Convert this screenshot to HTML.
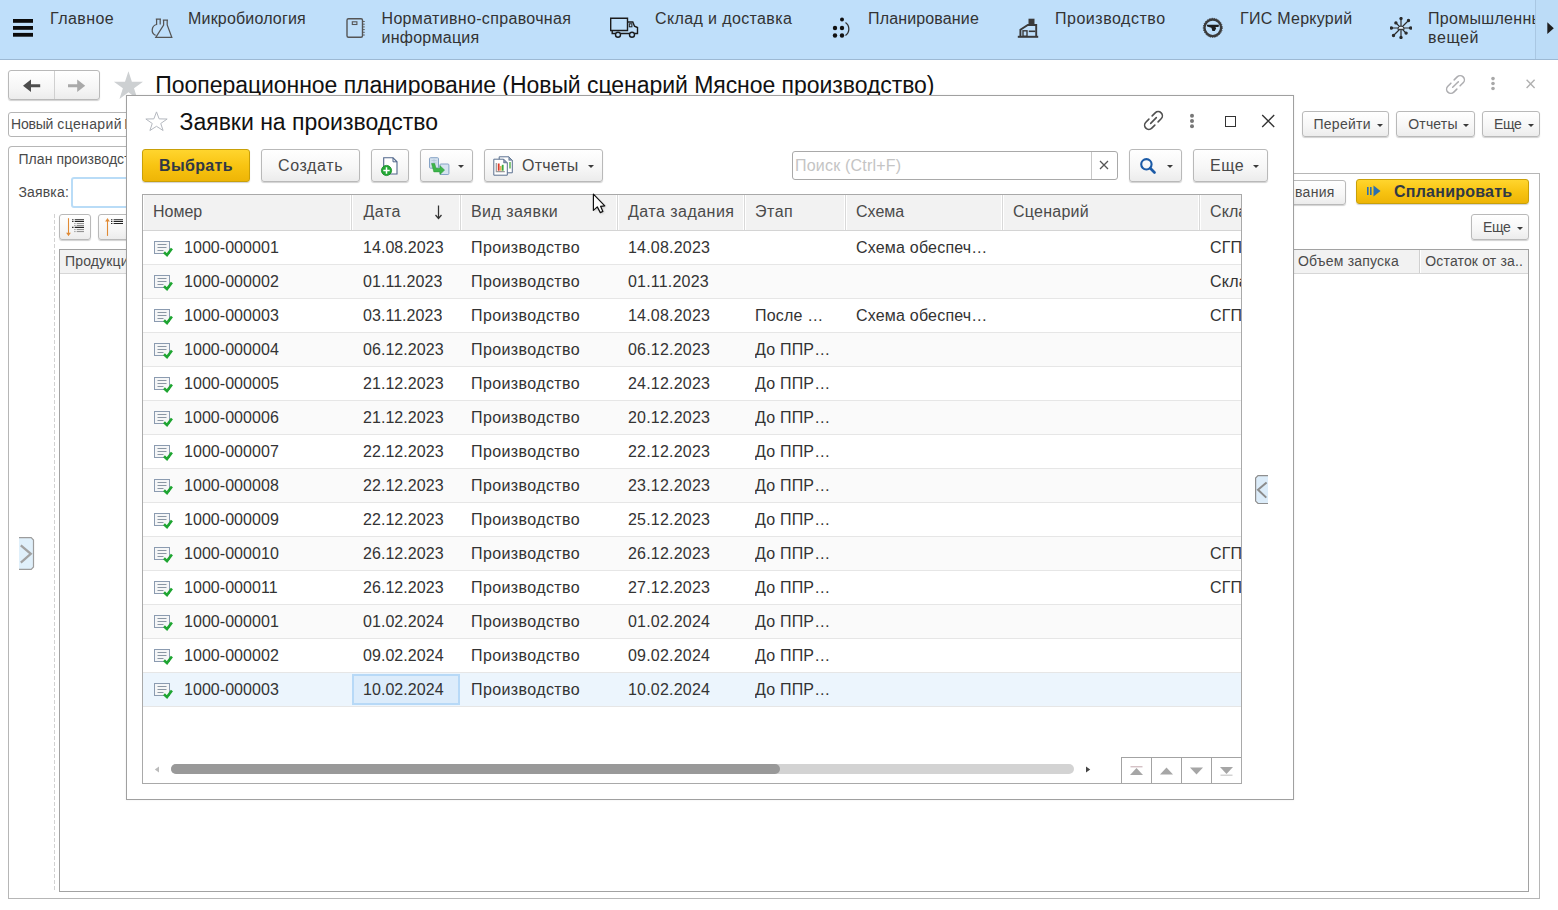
<!DOCTYPE html>
<html lang="ru">
<head>
<meta charset="utf-8">
<title>Заявки на производство</title>
<style>
*{box-sizing:border-box;margin:0;padding:0}
html,body{width:1558px;height:910px;overflow:hidden;background:#fff}
body{font-family:"Liberation Sans",sans-serif;color:#333;position:relative;font-size:14px}
.abs{position:absolute}
#top{position:absolute;left:0;top:0;width:1558px;height:60px;background:#bfdffa;border-bottom:1px solid #9db9d3}
#top .t{position:absolute;letter-spacing:.22px;font-size:16px;line-height:19px;color:#333;white-space:nowrap}
#top svg{position:absolute}
.btn{position:absolute;border:1px solid #b9b9b9;border-radius:3px;background:linear-gradient(#ffffff 0%,#f6f6f6 60%,#ececec 100%);box-shadow:0 1px 1px rgba(0,0,0,.18);color:#444;white-space:nowrap}
.btn.y{background:linear-gradient(#ffd52e 0%,#f8c412 50%,#eeb506 100%);border-color:#c9a008;color:#333;font-weight:bold}
.lbl{position:absolute;white-space:nowrap}
.caret{position:absolute;width:0;height:0;border-left:3px solid transparent;border-right:3px solid transparent;border-top:3.300px solid #3a3a3a}
.bg .lbl{color:#4a4a4a}
.s14{font-size:14px;line-height:17px}
.s16{font-size:16px;line-height:19px}
#modal{position:absolute;left:126px;top:95px;width:1168px;height:705px;background:#fff;border:1px solid #a0a0a0;box-shadow:0 0 2px rgba(0,0,0,.08)}
#grid{position:absolute;left:142px;top:194px;width:1100px;height:590px;border:1px solid #a9a9a9;background:#fff;overflow:hidden}
#ghead{position:absolute;left:0;top:0;width:1098px;height:36px;background:#f2f2f2;border-bottom:1px solid #d4d4d4}
.hc{position:absolute;top:0;height:35px;border-right:1px solid #d9d9d9;box-shadow:inset -1px 0 0 #fff, inset 1px 0 0 #fff;font-size:16px;line-height:33px;color:#4a4a4a;padding-left:10px;white-space:nowrap;overflow:hidden}
.row{position:absolute;left:0;width:1098px;height:34px;border-bottom:1px solid #e6e6e6;background:#fff}
.row.alt{background:#fafafa}
.row.sel{background:#ecf5fd}
.c{position:absolute;top:0;height:33px;line-height:33px;font-size:16px;color:#333;white-space:nowrap;overflow:hidden}
</style>
</head>
<body>
<div id="top">
<!-- hamburger -->
<svg style="left:13px;top:19px" width="20" height="18" viewBox="0 0 20 18"><rect x="0" y="0" width="20" height="3.800" fill="#0c0c0c"/><rect x="0" y="7" width="20" height="3.800" fill="#0c0c0c"/><rect x="0" y="13.900" width="20" height="3.800" fill="#0c0c0c"/></svg>
<div class="t" style="left:50px;top:9px;letter-spacing:.44px">Главное</div>
<!-- flask -->
<svg style="left:150px;top:16px" width="24" height="24" viewBox="0 0 24 24" fill="none" stroke="#555" stroke-width="1.250"><path d="M5.800 3h5.200M6.600 3v5.500a5.800 5.800 0 0 0 -1 10.900M10.200 3v5.500"/><path d="M12.800 4h5.200M13.600 4v5l-7.800 12.300h16L17.200 9V4"/></svg>
<div class="t" style="left:188px;top:9px;letter-spacing:0.18px">Микробиология</div>
<!-- notebook -->
<svg style="left:345px;top:17px" width="22" height="23" viewBox="0 0 22 23" fill="none" stroke="#555" stroke-width="1.400"><rect x="2" y="1.700" width="15.500" height="18.600" rx="1.500"/><rect x="7.300" y="4.800" width="4.600" height="2.700" stroke-width="1.100"/><path d="M17.500 4.500h2.300M17.500 7.200h2.300M17.500 9.900h2.300M17.500 12.600h2.300M17.500 15.300h2.300M17.500 18h2.300" stroke-width=".9"/></svg>
<div class="t" style="left:381.500px;top:9px"><span style="letter-spacing:.33px">Нормативно-справочная</span><br><span style="letter-spacing:.25px">информация</span></div>
<!-- truck -->
<svg style="left:609px;top:16px" width="30" height="24" viewBox="0 0 30 24" fill="none" stroke="#1c1c1c" stroke-width="1.400"><path d="M1.700 2.200h16.800v12.300h-16.800z"/><path d="M18.500 6h5.300l1.700 4.200 3 1.300v6h-2.700M20.300 17.500h-8.600M6.300 17.500H3.200v-3"/><rect x="20.300" y="7.800" width="2.600" height="3" stroke-width="1"/><circle cx="9" cy="18.800" r="2.500"/><circle cx="23" cy="18.800" r="2.500"/></svg>
<div class="t" style="left:655px;top:9px;letter-spacing:0.38px">Склад и доставка</div>
<!-- planning dots -->
<svg style="left:831px;top:16px" width="22" height="24" viewBox="0 0 22 24"><g fill="#111"><circle cx="11" cy="3.500" r="2"/><circle cx="4" cy="12" r="2.200"/><circle cx="11" cy="12" r="2.200"/><circle cx="4" cy="19.500" r="2.200"/><circle cx="11" cy="19.500" r="2.200"/></g><path d="M14.500 6.500a8 8 0 0 1 0 13" fill="none" stroke="#333" stroke-width="1.300"/></svg>
<div class="t" style="left:868px;top:9px;letter-spacing:0.15px">Планирование</div>
<!-- factory -->
<svg style="left:1017px;top:17px" width="22" height="22" viewBox="0 0 22 22"><path d="M11.500 1.700h6v6.500h-6z" fill="#3a3a3a"/><path d="M3.400 19V12.800L10.800 8h8.400v11" fill="none" stroke="#3a3a3a" stroke-width="1.900"/><path d="M.8 19.800h20.400" stroke="#3a3a3a" stroke-width="2"/><rect x="6" y="13.800" width="4" height="5.500" fill="none" stroke="#3a3a3a" stroke-width="1.400"/><path d="M11.800 14.300h6.500" stroke="#3a3a3a" stroke-width="1.600"/></svg>
<div class="t" style="left:1055px;top:9px;letter-spacing:0.52px">Производство</div>
<!-- mercury -->
<svg style="left:1202px;top:17px" width="22" height="22" viewBox="0 0 22 22"><circle cx="10.800" cy="10.800" r="8.300" fill="none" stroke="#3a3a3a" stroke-width="2.300"/><circle cx="10.800" cy="10.800" r="9.500" fill="none" stroke="#3a3a3a" stroke-width="1" stroke-dasharray="1.300 1.100"/><path d="M4.700 7.800h12.300l-.5 2.200h-3l.6 1.500-1.300 2.600h-2.400l-1-3.300-4.200-1.200z" fill="#1e1e1e"/></svg>
<div class="t" style="left:1240px;top:9px;letter-spacing:0.26px">ГИС Меркурий</div>
<!-- burst -->
<svg style="left:1389.900px;top:16.800px" width="22" height="22" viewBox="0 0 22 22" stroke="#2a2a2a" stroke-width="1.200" fill="#2a2a2a"><path d="M11.0 11.0L20.60 11.00M11.0 11.0L16.09 16.09M11.0 11.0L11.00 20.40M11.0 11.0L3.50 18.50M11.0 11.0L1.40 11.00M11.0 11.0L5.91 5.91M11.0 11.0L11.00 1.60M11.0 11.0L18.50 3.50" fill="none"/><circle cx="20.60" cy="11.00" r="1.100"/><circle cx="16.09" cy="16.09" r="1.100"/><circle cx="11.00" cy="20.40" r="1.100"/><circle cx="3.50" cy="18.50" r="1.100"/><circle cx="1.40" cy="11.00" r="1.100"/><circle cx="5.91" cy="5.91" r="1.100"/><circle cx="11.00" cy="1.60" r="1.100"/><circle cx="18.50" cy="3.50" r="1.100"/><path d="M7.800 12.300a3.200 3.200 0 0 1 6.400 0z" fill="#e4f1fc" stroke-width="1"/></svg>
<div class="t" style="left:1428px;top:9px;width:107px;overflow:hidden"><span style="letter-spacing:.3px">Промышленные</span><br><span style="letter-spacing:.6px">вещей</span></div>
<div class="abs" style="left:1535px;top:0;width:23px;height:59px;background:#bcdcf7;border-left:1px solid #a9c7e2"></div>
<svg style="left:1547px;top:22px" width="9" height="13" viewBox="0 0 9 13"><path d="M0.300 0.300L6.800 6.200L0.300 12.100z" fill="#1e1e1e"/></svg>
</div>
<!--BG-->
<div class="bg" id="bg">
<!-- back/forward -->
<div class="btn" style="left:8px;top:70px;width:92px;height:30px"></div>
<div class="abs" style="left:54px;top:71px;width:1px;height:28px;background:#d0d0d0"></div>
<svg class="abs" style="left:22px;top:78px" width="20" height="15" viewBox="0 0 20 15"><path d="M1 7.700l8-6.200v4.700h9.200v3h-9.200v4.700z" fill="#4d4d4d"/></svg><svg class="abs" style="left:67px;top:78px" width="20" height="15" viewBox="0 0 20 15"><path d="M18.200 7.700l-8-6.200v4.700h-9.200v3h9.200v4.700z" fill="#a9a9a9"/></svg>
<!-- star -->
<svg class="abs" style="left:112px;top:70px" width="33" height="31" viewBox="0 0 33 31"><path d="M16.45 1.20L19.89 11.77L31.00 11.77L22.01 18.31L25.44 28.88L16.45 22.34L7.46 28.88L10.89 18.31L1.90 11.77L13.01 11.77z" fill="#cdd0d2"/></svg>
<div class="lbl" style="left:155.300px;top:72px;font-size:23px;line-height:27px;color:#111;letter-spacing:-.05px">Пооперационное планирование (Новый сценарий Мясное производство)</div>
<!-- right icons -->
<svg class="abs" style="left:1444px;top:72.5px" width="23" height="23" viewBox="-11.500 -11.500 23 23" fill="none" stroke="#adadb0" stroke-width="1.5" stroke-linecap="round"><g transform="rotate(-45)"><path d="M2.300 -4.200H6.600A4.200 4.200 0 0 1 6.600 4.200H2.300"/><path d="M-2.300 -4.200H-6.600A4.200 4.200 0 0 0 -6.600 4.200H-2.300"/><path d="M-4 0H4"/></g></svg>
<svg class="abs" style="left:1490px;top:76px" width="6" height="15" viewBox="0 0 6 15" fill="#a8a8a8"><circle cx="3" cy="2.600" r="1.800"/><circle cx="3" cy="7.500" r="1.800"/><circle cx="3" cy="12.500" r="1.800"/></svg>
<svg class="abs" style="left:1525px;top:78px" width="12" height="12" viewBox="0 0 12 12"><path d="M1.600 1.800l8 8.200M9.600 1.800l-8 8.200" stroke="#b0b0b0" stroke-width="1.400"/></svg>
<!-- row2 -->
<div class="abs" style="left:8px;top:112px;width:400px;height:25px;border:1px solid #b5b5b5;border-radius:3px;background:#fff"></div>
<div class="lbl" style="left:11px;top:116px;font-size:14px;line-height:17px;letter-spacing:0.15px"><span style="letter-spacing:-.2px">Новый</span> <span style="letter-spacing:.38px">сценарий</span><span style="margin-left:-1.800px"> Мясное производство</span></div>
<div class="btn" style="left:1302px;top:111px;width:87px;height:26px"></div>
<div class="lbl" style="left:1313.500px;top:116px;font-size:14px;line-height:17px;letter-spacing:0.25px">Перейти</div><div class="caret" style="left:1377px;top:124px"></div>
<div class="btn" style="left:1396px;top:111px;width:79px;height:26px"></div>
<div class="lbl" style="left:1408.3px;top:116px;font-size:14px;line-height:17px;letter-spacing:0.15px">Отчеты</div><div class="caret" style="left:1463px;top:124px"></div>
<div class="btn" style="left:1482px;top:111px;width:58px;height:26px"></div>
<div class="lbl" style="left:1494px;top:116px;font-size:14px;line-height:17px;letter-spacing:-0.3px">Еще</div><div class="caret" style="left:1528px;top:124px"></div>
<!-- group -->
<div class="abs" style="left:8px;top:173px;width:1532px;height:726px;border:1px solid #b6b6b6;background:#fff"></div><div class="abs" style="left:8px;top:146px;width:400px;height:30px;border:1px solid #b6b6b6;border-bottom:none;border-radius:4px 4px 0 0;background:#fff"></div>
<div class="lbl" style="left:18.5px;top:151px;font-size:14px;line-height:17px;letter-spacing:0.05px">План производства</div>
<div class="lbl" style="left:18.5px;top:184px;font-size:14px;line-height:17px;letter-spacing:0.15px">Заявка:</div>
<div class="abs" style="left:71px;top:177px;width:300px;height:31px;border:2px solid #b9dcf7;border-radius:3px;background:#fff"></div>
<div class="abs" style="left:54px;top:214px;width:1px;height:676px;background:repeating-linear-gradient(#d2d2d2 0,#d2d2d2 3.800px,#fff 3.800px,#fff 6px)"></div>
<div class="btn" style="left:59px;top:214px;width:32px;height:26px"></div>
<svg class="abs" style="left:64px;top:216px" width="22" height="22" viewBox="0 0 22 22"><path d="M4.500 2.200V19.500" stroke="#e08a35" stroke-width="1.100"/><path d="M2.100 16.800L4.500 20 6.900 16.800z" fill="#e08a35"/><path d="M8.100 3.700h1.400M10.700 3.700h9.300M8.100 5.500h1.400M10.700 5.500h9.300M8.100 11.400h1.400M10.700 11.400h9.300" stroke="#222" stroke-width="1.100"/><path d="M10.300 7.600h1.200M12.700 7.600h7.300M10.300 9.500h1.200M12.700 9.500h7.300M10.300 13.600h1.200M12.700 13.600h7.300M10.300 15.600h1.200M12.700 15.600h7.300" stroke="#8a8a8a" stroke-width="1"/></svg>
<div class="btn" style="left:98px;top:214px;width:32px;height:26px"></div>
<svg class="abs" style="left:103px;top:216px" width="22" height="22" viewBox="0 0 22 22"><path d="M4.500 19.900V2.700" stroke="#e08a35" stroke-width="1.100"/><path d="M2.100 5.400L4.500 2.200 6.900 5.400z" fill="#e08a35"/><path d="M8 3.700h1.400M10.600 3.700h9.400M8 5.500h1.400M10.600 5.500h9.400M8 7.500h1.400M10.600 7.500h9.400" stroke="#222" stroke-width="1.100"/></svg>
<!-- bg table -->
<div class="abs" style="left:59px;top:249px;width:1470px;height:643px;border:1px solid #a2a2a2;background:#fff"></div>
<div class="abs" style="left:60px;top:250px;width:1468px;height:24px;background:#f2f2f2;border-bottom:1px solid #d6d6d6"></div>
<div class="lbl" style="left:65px;top:253px;font-size:14px;line-height:17px;letter-spacing:0.15px">Продукция</div>
<div class="abs" style="left:1419px;top:250px;width:1px;height:23px;background:#d0d0d0"></div>
<div class="abs" style="left:1420px;top:250px;width:1px;height:23px;background:#fff"></div>
<div class="lbl" style="left:1298px;top:253px;font-size:14px;line-height:17px;letter-spacing:0.2px">Объем запуска</div>
<div class="lbl" style="left:1425.3px;top:253px;font-size:14px;line-height:17px;letter-spacing:0.15px">Остаток от за..</div>
<!-- buttons right -->
<div class="btn" style="left:1200px;top:180px;width:146px;height:25px"></div>
<div class="lbl" style="left:1295px;top:184px;font-size:14px;line-height:17px;letter-spacing:0.3px">вания</div>
<div class="btn y" style="left:1356px;top:179px;width:173px;height:25px"></div>
<svg class="abs" style="left:1367px;top:185px" width="15" height="12" viewBox="0 0 15 12"><rect x="0" y="2" width="1.600" height="8" fill="#2c6fb0"/><rect x="3" y="2" width="1.600" height="8" fill="#2c6fb0"/><path d="M6.500 0.500L13.500 6 6.500 11.500z" fill="#2c6fb0"/></svg>
<div class="lbl" style="left:1394px;top:182px;font-size:16px;line-height:19px;font-weight:bold;color:#303845;letter-spacing:.24px">Спланировать</div>
<div class="btn" style="left:1471px;top:214px;width:58px;height:26px"></div>
<div class="lbl" style="left:1483px;top:219px;font-size:14px;line-height:17px;letter-spacing:-0.3px">Еще</div><div class="caret" style="left:1517px;top:227px"></div>
<!-- left collapser -->
<svg class="abs" style="left:19px;top:537px" width="16" height="34" viewBox="0 0 16 34"><path d="M0 .7h12.200l2.300 2.300v27l-2.300 2.300H0z" fill="#e0f0fb"/><path d="M0 .7h12.200l2.300 2.300v27l-2.300 2.300H0" fill="none" stroke="#9c9c9c" stroke-width="1.200"/><path d="M1.800 8.400l10 8.400-10 8.900" fill="none" stroke="#a2a2a2" stroke-width="2.300"/></svg>
</div>
<!--MODAL-->
<div id="modal"></div>
<!-- modal title -->
<svg class="abs" style="left:145px;top:110px" width="23" height="23" viewBox="0 0 23 23"><path d="M11.50 1.90L14.13 8.87L22.15 9.02L15.76 13.47L18.08 20.53L11.50 16.32L4.92 20.53L7.24 13.47L0.85 9.02L8.87 8.87z" fill="#fff" stroke="#b4b8bf" stroke-width="1"/></svg>
<div class="lbl" style="left:179.500px;top:109px;font-size:23px;line-height:27px;color:#111;letter-spacing:0">Заявки на производство</div>
<svg class="abs" style="left:1141.8px;top:109px" width="23" height="23" viewBox="-11.500 -11.500 23 23" fill="none" stroke="#505050" stroke-width="1.6" stroke-linecap="round"><g transform="rotate(-45)"><path d="M2.300 -4.200H6.600A4.200 4.200 0 0 1 6.600 4.200H2.300"/><path d="M-2.300 -4.200H-6.600A4.200 4.200 0 0 0 -6.600 4.200H-2.300"/><path d="M-4 0H4"/></g></svg>
<svg class="abs" style="left:1189px;top:112px" width="6" height="18" viewBox="0 0 6 18" fill="#777"><circle cx="3" cy="3.800" r="2"/><circle cx="3" cy="9.100" r="2"/><circle cx="3" cy="14.300" r="2"/></svg>
<div class="abs" style="left:1225px;top:116px;width:11px;height:11px;border:1.500px solid #333"></div>
<svg class="abs" style="left:1261px;top:114px" width="14" height="14" viewBox="0 0 14 14"><path d="M1.200 1l12 12M13.200 1L1.200 13" stroke="#333" stroke-width="1.350"/></svg>
<!-- toolbar -->
<div class="btn y" style="left:142px;top:149px;width:108px;height:33px"></div>
<div class="lbl" style="left:159px;top:156px;font-size:16px;line-height:19px;font-weight:bold;color:#303845;letter-spacing:.35px">Выбрать</div>
<div class="btn" style="left:261px;top:149px;width:99px;height:33px"></div>
<div class="lbl" style="left:278px;top:156px;font-size:16px;line-height:19px;color:#484848;letter-spacing:.62px">Создать</div>
<div class="btn" style="left:371px;top:149px;width:38px;height:33px"></div>
<svg class="abs" style="left:380px;top:155px" width="20" height="22" viewBox="0 0 20 22"><path d="M3.700 2.800h9.300l4 4v12.200h-13.300z" fill="#fff" stroke="#50668a" stroke-width="1.100"/><path d="M13 2.800v4h4" fill="none" stroke="#50668a" stroke-width="1"/><circle cx="6.500" cy="15.500" r="5.100" fill="#22a834" stroke="#148a24" stroke-width=".8"/><path d="M6.500 12.300v6.400M3.300 15.500h6.400" stroke="#fff" stroke-width="1.500"/></svg>
<div class="btn" style="left:420px;top:149px;width:53px;height:33px"></div>
<svg class="abs" style="left:428px;top:156px" width="22" height="20" viewBox="0 0 22 20"><rect x="1.500" y="1.700" width="9" height="10.500" rx="1" fill="#d3e0ee" stroke="#86a3c6"/><path d="M3.500 4.500h5M3.500 7h5M6 3v7" stroke="#b4c7dc" stroke-width=".8"/><rect x="11.900" y="8" width="9" height="10.500" rx="1" fill="#d6e3f0" stroke="#86a3c6"/><path d="M3.500 7.500h3.200l1.300 4.800h4v-2.600l4.600 4.400-4.600 4.400v-2.600h-6.200z" fill="#3db54a" stroke="#2a9a38" stroke-width=".5"/></svg>
<div class="caret" style="left:458px;top:165px"></div>
<div class="btn" style="left:484px;top:149px;width:119px;height:33px"></div>
<svg class="abs" style="left:492px;top:154px" width="22" height="23" viewBox="0 0 22 23"><path d="M7.200 2.800h9.600l3.500 3.500v12.500h-13.100z" fill="#fff" stroke="#5a708f" stroke-width="1"/><path d="M16.800 2.800v3.500h3.500z" fill="#8a9ab0" stroke="#5a708f" stroke-width=".6"/><rect x="17.300" y="8" width="1.400" height="6.500" fill="#55b24a"/><path d="M1.800 5.200h9.800l3.700 3.700v12.300h-13.500z" fill="#fff" stroke="#5a708f" stroke-width="1"/><path d="M11.600 5.200v3.700h3.700z" fill="#8a9ab0" stroke="#5a708f" stroke-width=".6"/><path d="M4.300 9v8.700h8.500" fill="none" stroke="#9a9a9a" stroke-width="1.200"/><rect x="5.800" y="9.500" width="1.800" height="7.200" fill="#dc3b28"/><rect x="8.200" y="12" width="1.300" height="4.700" fill="#e89b3a"/><rect x="9.800" y="10.800" width="1.800" height="5.900" fill="#39ad3f"/></svg>
<div class="lbl" style="left:522px;top:156px;font-size:16px;line-height:19px;color:#484848;letter-spacing:.2px">Отчеты</div>
<div class="caret" style="left:588px;top:165px"></div>
<!-- search -->
<div class="abs" style="left:792px;top:151px;width:326px;height:29px;border:1px solid #a9a9a9;border-radius:3px;background:#fff"></div>
<div class="abs" style="left:1091px;top:152px;width:1px;height:27px;background:#c8c8c8"></div>
<div class="lbl" style="left:795px;top:156px;font-size:16px;line-height:19px;color:#c4c4c4;letter-spacing:.2px">Поиск (Ctrl+F)</div>
<svg class="abs" style="left:1099px;top:160px" width="10" height="10" viewBox="0 0 10 10"><path d="M1 1l8 8M9 1L1 9" stroke="#555" stroke-width="1.300"/></svg>
<div class="btn" style="left:1129px;top:149px;width:53px;height:33px"></div>
<svg class="abs" style="left:1139px;top:157px" width="18" height="18" viewBox="0 0 18 18"><circle cx="7.400" cy="7.300" r="5.200" fill="none" stroke="#1b5aa6" stroke-width="2.100"/><path d="M11.300 11.300l4.200 4.200" stroke="#1b5aa6" stroke-width="2.700" stroke-linecap="round"/></svg>
<div class="caret" style="left:1167px;top:165px"></div>
<div class="btn" style="left:1193px;top:149px;width:75px;height:33px"></div>
<div class="lbl" style="left:1210px;top:156px;font-size:16px;line-height:19px;color:#484848;letter-spacing:.55px">Еще</div>
<div class="caret" style="left:1253px;top:165px"></div>
<!-- side collapser -->
<svg class="abs" style="left:1254px;top:475px" width="15" height="30" viewBox="0 0 15 30"><path d="M14 .7H4l-2.400 2.400v23l2.400 2.400h10z" fill="#dcecf9"/><path d="M14 .7H4l-2.400 2.400v23l2.400 2.400h10" fill="none" stroke="#8e8e8e" stroke-width="1.200"/><path d="M12.600 7.400L4 14.700l8.300 7.900" fill="none" stroke="#8c8c8c" stroke-width="2"/></svg>
<div id="grid"><div id="ghead"><div class="hc" style="left:0px;width:209px;letter-spacing:0px;padding-left:10px">Номер</div><div class="hc" style="left:209px;width:109px;letter-spacing:0.5px;padding-left:11.5px">Дата</div><div class="hc" style="left:318px;width:157px;letter-spacing:0.45px;padding-left:10px">Вид заявки</div><div class="hc" style="left:475px;width:127px;letter-spacing:0.47px;padding-left:10px">Дата задания</div><div class="hc" style="left:602px;width:101px;letter-spacing:0.5px;padding-left:10px">Этап</div><div class="hc" style="left:703px;width:157px;letter-spacing:0px;padding-left:10px">Схема</div><div class="hc" style="left:860px;width:197px;letter-spacing:0.25px;padding-left:10px">Сценарий</div><div class="hc" style="left:1057px;width:60px;letter-spacing:0.1px;padding-left:10px">Склад</div><svg class="abs" style="left:291px;top:10px" width="9" height="15" viewBox="0 0 9 15"><path d="M4.500 0.500v13M1.500 10l3 3.500 3-3.500" fill="none" stroke="#333" stroke-width="1.250"/></svg></div><div class="row" style="top:36px"><svg class="abs" style="left:10px;top:8px" width="22" height="19" viewBox="0 0 22 19"><rect x="1.500" y="2.500" width="15" height="12" fill="#f5f6f7" stroke="#8b9bb0"/><path d="M4.500 5.500h9M4.500 8.500h9M4.500 11.500h6" stroke="#8a96a3" stroke-width="1"/><path d="M11 13.200l3 2.900L18.900 9.400" fill="none" stroke="#1ea531" stroke-width="2.600"/></svg><div class="c" style="left:41px;letter-spacing:.05px">1000-000001</div><div class="c" style="left:220px;letter-spacing:.05px">14.08.2023</div><div class="c" style="left:328px;letter-spacing:.4px">Производство</div><div class="c" style="left:485px;letter-spacing:.2px">14.08.2023</div><div class="c" style="left:713px;letter-spacing:.2px">Схема обеспеч…</div><div class="c" style="left:1067px;letter-spacing:.2px">СГП</div></div><div class="row alt" style="top:70px"><svg class="abs" style="left:10px;top:8px" width="22" height="19" viewBox="0 0 22 19"><rect x="1.500" y="2.500" width="15" height="12" fill="#f5f6f7" stroke="#8b9bb0"/><path d="M4.500 5.500h9M4.500 8.500h9M4.500 11.500h6" stroke="#8a96a3" stroke-width="1"/><path d="M11 13.200l3 2.900L18.900 9.400" fill="none" stroke="#1ea531" stroke-width="2.600"/></svg><div class="c" style="left:41px;letter-spacing:.05px">1000-000002</div><div class="c" style="left:220px;letter-spacing:.05px">01.11.2023</div><div class="c" style="left:328px;letter-spacing:.4px">Производство</div><div class="c" style="left:485px;letter-spacing:.2px">01.11.2023</div><div class="c" style="left:1067px;letter-spacing:.2px">Склад</div></div><div class="row" style="top:104px"><svg class="abs" style="left:10px;top:8px" width="22" height="19" viewBox="0 0 22 19"><rect x="1.500" y="2.500" width="15" height="12" fill="#f5f6f7" stroke="#8b9bb0"/><path d="M4.500 5.500h9M4.500 8.500h9M4.500 11.500h6" stroke="#8a96a3" stroke-width="1"/><path d="M11 13.200l3 2.900L18.900 9.400" fill="none" stroke="#1ea531" stroke-width="2.600"/></svg><div class="c" style="left:41px;letter-spacing:.05px">1000-000003</div><div class="c" style="left:220px;letter-spacing:.05px">03.11.2023</div><div class="c" style="left:328px;letter-spacing:.4px">Производство</div><div class="c" style="left:485px;letter-spacing:.2px">14.08.2023</div><div class="c" style="left:612px;letter-spacing:.2px">После …</div><div class="c" style="left:713px;letter-spacing:.2px">Схема обеспеч…</div><div class="c" style="left:1067px;letter-spacing:.2px">СГП</div></div><div class="row alt" style="top:138px"><svg class="abs" style="left:10px;top:8px" width="22" height="19" viewBox="0 0 22 19"><rect x="1.500" y="2.500" width="15" height="12" fill="#f5f6f7" stroke="#8b9bb0"/><path d="M4.500 5.500h9M4.500 8.500h9M4.500 11.500h6" stroke="#8a96a3" stroke-width="1"/><path d="M11 13.200l3 2.900L18.900 9.400" fill="none" stroke="#1ea531" stroke-width="2.600"/></svg><div class="c" style="left:41px;letter-spacing:.05px">1000-000004</div><div class="c" style="left:220px;letter-spacing:.05px">06.12.2023</div><div class="c" style="left:328px;letter-spacing:.4px">Производство</div><div class="c" style="left:485px;letter-spacing:.2px">06.12.2023</div><div class="c" style="left:612px;letter-spacing:.2px">До ППР…</div></div><div class="row" style="top:172px"><svg class="abs" style="left:10px;top:8px" width="22" height="19" viewBox="0 0 22 19"><rect x="1.500" y="2.500" width="15" height="12" fill="#f5f6f7" stroke="#8b9bb0"/><path d="M4.500 5.500h9M4.500 8.500h9M4.500 11.500h6" stroke="#8a96a3" stroke-width="1"/><path d="M11 13.200l3 2.900L18.900 9.400" fill="none" stroke="#1ea531" stroke-width="2.600"/></svg><div class="c" style="left:41px;letter-spacing:.05px">1000-000005</div><div class="c" style="left:220px;letter-spacing:.05px">21.12.2023</div><div class="c" style="left:328px;letter-spacing:.4px">Производство</div><div class="c" style="left:485px;letter-spacing:.2px">24.12.2023</div><div class="c" style="left:612px;letter-spacing:.2px">До ППР…</div></div><div class="row alt" style="top:206px"><svg class="abs" style="left:10px;top:8px" width="22" height="19" viewBox="0 0 22 19"><rect x="1.500" y="2.500" width="15" height="12" fill="#f5f6f7" stroke="#8b9bb0"/><path d="M4.500 5.500h9M4.500 8.500h9M4.500 11.500h6" stroke="#8a96a3" stroke-width="1"/><path d="M11 13.200l3 2.900L18.900 9.400" fill="none" stroke="#1ea531" stroke-width="2.600"/></svg><div class="c" style="left:41px;letter-spacing:.05px">1000-000006</div><div class="c" style="left:220px;letter-spacing:.05px">21.12.2023</div><div class="c" style="left:328px;letter-spacing:.4px">Производство</div><div class="c" style="left:485px;letter-spacing:.2px">20.12.2023</div><div class="c" style="left:612px;letter-spacing:.2px">До ППР…</div></div><div class="row" style="top:240px"><svg class="abs" style="left:10px;top:8px" width="22" height="19" viewBox="0 0 22 19"><rect x="1.500" y="2.500" width="15" height="12" fill="#f5f6f7" stroke="#8b9bb0"/><path d="M4.500 5.500h9M4.500 8.500h9M4.500 11.500h6" stroke="#8a96a3" stroke-width="1"/><path d="M11 13.200l3 2.900L18.900 9.400" fill="none" stroke="#1ea531" stroke-width="2.600"/></svg><div class="c" style="left:41px;letter-spacing:.05px">1000-000007</div><div class="c" style="left:220px;letter-spacing:.05px">22.12.2023</div><div class="c" style="left:328px;letter-spacing:.4px">Производство</div><div class="c" style="left:485px;letter-spacing:.2px">22.12.2023</div><div class="c" style="left:612px;letter-spacing:.2px">До ППР…</div></div><div class="row alt" style="top:274px"><svg class="abs" style="left:10px;top:8px" width="22" height="19" viewBox="0 0 22 19"><rect x="1.500" y="2.500" width="15" height="12" fill="#f5f6f7" stroke="#8b9bb0"/><path d="M4.500 5.500h9M4.500 8.500h9M4.500 11.500h6" stroke="#8a96a3" stroke-width="1"/><path d="M11 13.200l3 2.900L18.900 9.400" fill="none" stroke="#1ea531" stroke-width="2.600"/></svg><div class="c" style="left:41px;letter-spacing:.05px">1000-000008</div><div class="c" style="left:220px;letter-spacing:.05px">22.12.2023</div><div class="c" style="left:328px;letter-spacing:.4px">Производство</div><div class="c" style="left:485px;letter-spacing:.2px">23.12.2023</div><div class="c" style="left:612px;letter-spacing:.2px">До ППР…</div></div><div class="row" style="top:308px"><svg class="abs" style="left:10px;top:8px" width="22" height="19" viewBox="0 0 22 19"><rect x="1.500" y="2.500" width="15" height="12" fill="#f5f6f7" stroke="#8b9bb0"/><path d="M4.500 5.500h9M4.500 8.500h9M4.500 11.500h6" stroke="#8a96a3" stroke-width="1"/><path d="M11 13.200l3 2.900L18.900 9.400" fill="none" stroke="#1ea531" stroke-width="2.600"/></svg><div class="c" style="left:41px;letter-spacing:.05px">1000-000009</div><div class="c" style="left:220px;letter-spacing:.05px">22.12.2023</div><div class="c" style="left:328px;letter-spacing:.4px">Производство</div><div class="c" style="left:485px;letter-spacing:.2px">25.12.2023</div><div class="c" style="left:612px;letter-spacing:.2px">До ППР…</div></div><div class="row alt" style="top:342px"><svg class="abs" style="left:10px;top:8px" width="22" height="19" viewBox="0 0 22 19"><rect x="1.500" y="2.500" width="15" height="12" fill="#f5f6f7" stroke="#8b9bb0"/><path d="M4.500 5.500h9M4.500 8.500h9M4.500 11.500h6" stroke="#8a96a3" stroke-width="1"/><path d="M11 13.200l3 2.900L18.900 9.400" fill="none" stroke="#1ea531" stroke-width="2.600"/></svg><div class="c" style="left:41px;letter-spacing:.05px">1000-000010</div><div class="c" style="left:220px;letter-spacing:.05px">26.12.2023</div><div class="c" style="left:328px;letter-spacing:.4px">Производство</div><div class="c" style="left:485px;letter-spacing:.2px">26.12.2023</div><div class="c" style="left:612px;letter-spacing:.2px">До ППР…</div><div class="c" style="left:1067px;letter-spacing:.2px">СГП</div></div><div class="row" style="top:376px"><svg class="abs" style="left:10px;top:8px" width="22" height="19" viewBox="0 0 22 19"><rect x="1.500" y="2.500" width="15" height="12" fill="#f5f6f7" stroke="#8b9bb0"/><path d="M4.500 5.500h9M4.500 8.500h9M4.500 11.500h6" stroke="#8a96a3" stroke-width="1"/><path d="M11 13.200l3 2.900L18.900 9.400" fill="none" stroke="#1ea531" stroke-width="2.600"/></svg><div class="c" style="left:41px;letter-spacing:.05px">1000-000011</div><div class="c" style="left:220px;letter-spacing:.05px">26.12.2023</div><div class="c" style="left:328px;letter-spacing:.4px">Производство</div><div class="c" style="left:485px;letter-spacing:.2px">27.12.2023</div><div class="c" style="left:612px;letter-spacing:.2px">До ППР…</div><div class="c" style="left:1067px;letter-spacing:.2px">СГП</div></div><div class="row alt" style="top:410px"><svg class="abs" style="left:10px;top:8px" width="22" height="19" viewBox="0 0 22 19"><rect x="1.500" y="2.500" width="15" height="12" fill="#f5f6f7" stroke="#8b9bb0"/><path d="M4.500 5.500h9M4.500 8.500h9M4.500 11.500h6" stroke="#8a96a3" stroke-width="1"/><path d="M11 13.200l3 2.900L18.900 9.400" fill="none" stroke="#1ea531" stroke-width="2.600"/></svg><div class="c" style="left:41px;letter-spacing:.05px">1000-000001</div><div class="c" style="left:220px;letter-spacing:.05px">01.02.2024</div><div class="c" style="left:328px;letter-spacing:.4px">Производство</div><div class="c" style="left:485px;letter-spacing:.2px">01.02.2024</div><div class="c" style="left:612px;letter-spacing:.2px">До ППР…</div></div><div class="row" style="top:444px"><svg class="abs" style="left:10px;top:8px" width="22" height="19" viewBox="0 0 22 19"><rect x="1.500" y="2.500" width="15" height="12" fill="#f5f6f7" stroke="#8b9bb0"/><path d="M4.500 5.500h9M4.500 8.500h9M4.500 11.500h6" stroke="#8a96a3" stroke-width="1"/><path d="M11 13.200l3 2.900L18.900 9.400" fill="none" stroke="#1ea531" stroke-width="2.600"/></svg><div class="c" style="left:41px;letter-spacing:.05px">1000-000002</div><div class="c" style="left:220px;letter-spacing:.05px">09.02.2024</div><div class="c" style="left:328px;letter-spacing:.4px">Производство</div><div class="c" style="left:485px;letter-spacing:.2px">09.02.2024</div><div class="c" style="left:612px;letter-spacing:.2px">До ППР…</div></div><div class="row alt sel" style="top:478px"><svg class="abs" style="left:10px;top:8px" width="22" height="19" viewBox="0 0 22 19"><rect x="1.500" y="2.500" width="15" height="12" fill="#f5f6f7" stroke="#8b9bb0"/><path d="M4.500 5.500h9M4.500 8.500h9M4.500 11.500h6" stroke="#8a96a3" stroke-width="1"/><path d="M11 13.200l3 2.900L18.900 9.400" fill="none" stroke="#1ea531" stroke-width="2.600"/></svg><div class="abs" style="left:209px;top:1px;width:108px;height:31px;border:2px solid #b7d9f7;background:#dcecfb"></div><div class="c" style="left:41px;letter-spacing:.05px">1000-000003</div><div class="c" style="left:220px;letter-spacing:.05px">10.02.2024</div><div class="c" style="left:328px;letter-spacing:.4px">Производство</div><div class="c" style="left:485px;letter-spacing:.2px">10.02.2024</div><div class="c" style="left:612px;letter-spacing:.2px">До ППР…</div></div>
<div class="abs" style="left:28px;top:569px;width:903px;height:10px;border-radius:5px;background:#d3d3d3"></div>
<div class="abs" style="left:28px;top:569px;width:609px;height:10px;border-radius:5px;background:#999"></div>
<svg class="abs" style="left:11px;top:571px" width="6" height="7" viewBox="0 0 6 7"><path d="M5 .5L.8 3.500 5 6.500z" fill="#bbb"/></svg>
<svg class="abs" style="left:942px;top:571px" width="6" height="7" viewBox="0 0 6 7"><path d="M1 .5L5.200 3.500 1 6.500z" fill="#444"/></svg>
<div class="abs" style="left:978px;top:562px;width:121px;height:27px;border-top:1px solid #a3a3a3;border-left:1px solid #a3a3a3;background:#fff"></div>
<div class="abs" style="left:1008px;top:563px;width:1px;height:26px;background:#a3a3a3"></div>
<div class="abs" style="left:1038px;top:563px;width:1px;height:26px;background:#a3a3a3"></div>
<div class="abs" style="left:1068px;top:563px;width:1px;height:26px;background:#a3a3a3"></div>
<svg class="abs" style="left:986px;top:571px" width="15" height="10" viewBox="0 0 15 10"><path d="M1.500 .8h12" stroke="#c4a8ae" stroke-width="1"/><path d="M7.500 2L14 9H1z" fill="#a6a6a6"/></svg>
<svg class="abs" style="left:1016px;top:572px" width="15" height="8" viewBox="0 0 15 8"><path d="M7.500 .5L14 7.500H1z" fill="#a6a6a6"/></svg>
<svg class="abs" style="left:1046px;top:572px" width="15" height="8" viewBox="0 0 15 8"><path d="M7.500 7.500L14 .5H1z" fill="#a6a6a6"/></svg>
<svg class="abs" style="left:1076px;top:571px" width="15" height="10" viewBox="0 0 15 10"><path d="M1.500 9.200h12" stroke="#c8c8c8" stroke-width="1.200"/><path d="M7.500 8L14 1H1z" fill="#a6a6a6"/></svg>
</div>
<svg class="abs" style="left:592px;top:193px;overflow:visible" width="18" height="24" viewBox="0 0 18 24"><path d="M2.800 2.800V18.800L6.600 15.400 9.600 21 12.200 19.800 9.900 14.700 14.100 14.200z" fill="#000" opacity=".18" style="filter:blur(1px)"/><path d="M1.400 1.100V17.400L5.300 13.900 8.300 19.600 10.900 18.400 8.600 13.300 12.800 12.800z" fill="#fff" stroke="#111" stroke-width="1.200" stroke-linejoin="round"/></svg>
</body>
</html>
